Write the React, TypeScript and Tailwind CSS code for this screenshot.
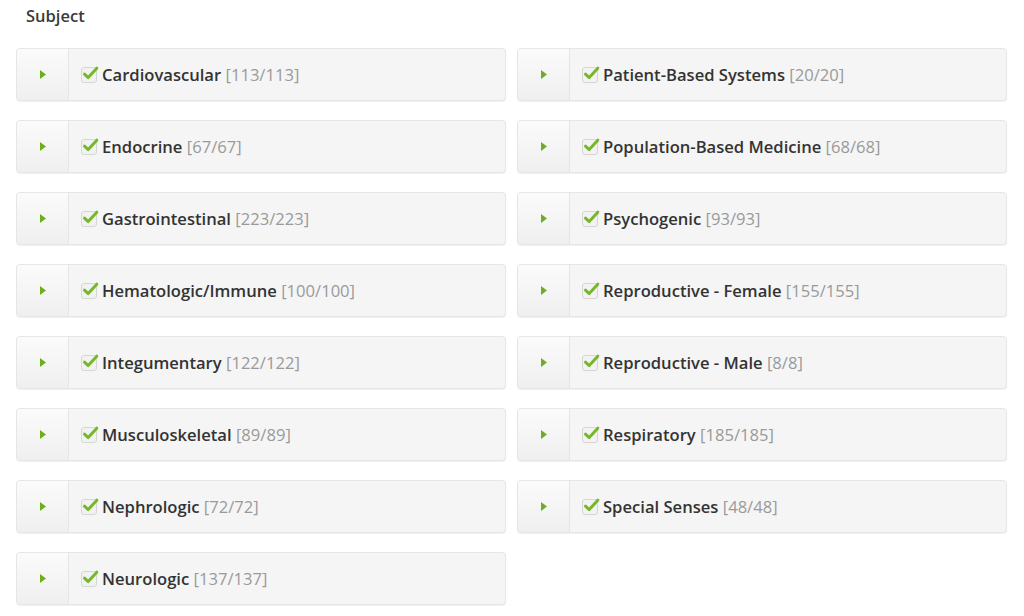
import React from "react";

const left = [
  ["Cardiovascular", "113/113"],
  ["Endocrine", "67/67"],
  ["Gastrointestinal", "223/223"],
  ["Hematologic/Immune", "100/100"],
  ["Integumentary", "122/122"],
  ["Musculoskeletal", "89/89"],
  ["Nephrologic", "72/72"],
  ["Neurologic", "137/137"],
];

const right = [
  ["Patient-Based Systems", "20/20"],
  ["Population-Based Medicine", "68/68"],
  ["Psychogenic", "93/93"],
  ["Reproductive - Female", "155/155"],
  ["Reproductive - Male", "8/8"],
  ["Respiratory", "185/185"],
  ["Special Senses", "48/48"],
];

function Check() {
  return (
    <span className="relative w-[16px] h-[16px] shrink-0 rounded-[3px] border border-[#d6d6d6] bg-[#f2f2f2]">
      <svg
        className="absolute left-[0px] top-[-3px]"
        width="17"
        height="16"
        viewBox="0 0 17 16"
      >
        <path
          d="M2.5 9.2 L6.2 12.6 L14.8 3.2"
          fill="none"
          stroke="#77b82a"
          strokeWidth="3"
          strokeLinecap="round"
          strokeLinejoin="round"
        />
      </svg>
    </span>
  );
}

function Row({ name, count }: { name: string; count: string }) {
  return (
    <div className="flex h-[53px] rounded-[4px] border border-[#e6e6e6] bg-[#f5f5f5] shadow-[0_1px_1px_rgba(0,0,0,0.06)]">
      <div className="w-[52px] shrink-0 flex items-center justify-center border-r border-[#e4e4e4] rounded-l-[4px] bg-gradient-to-b from-[#fbfbfb] to-[#efefef]">
        <svg width="6" height="9" viewBox="0 0 6 9">
          <path d="M0 0 L6 4.5 L0 9 Z" fill="#6fae22" />
        </svg>
      </div>
      <div className="flex items-center gap-[5px] pl-[12px]">
        <Check />
        <span className="pt-[2px] text-[16.6px] text-[#333] font-semibold">
          {name} <span className="font-normal text-[#9a9a9a]">[{count}]</span>
        </span>
      </div>
    </div>
  );
}

export default function App() {
  return (
    <div
      className="min-h-[616px] bg-white px-4 pr-[17px]"
      style={{ fontFamily: '"Open Sans", "Noto Sans", sans-serif' }}
    >
      <div className="h-[48px] pt-[4px] pl-[10px] text-[16.5px] font-semibold text-[#3a3a3a]">
        Subject
      </div>
      <div className="grid grid-cols-2 gap-x-[11px]">
        <div className="flex flex-col gap-[19px]">
          {left.map(([n, c]) => (
            <Row key={n} name={n} count={c} />
          ))}
        </div>
        <div className="flex flex-col gap-[19px]">
          {right.map(([n, c]) => (
            <Row key={n} name={n} count={c} />
          ))}
        </div>
      </div>
    </div>
  );
}
